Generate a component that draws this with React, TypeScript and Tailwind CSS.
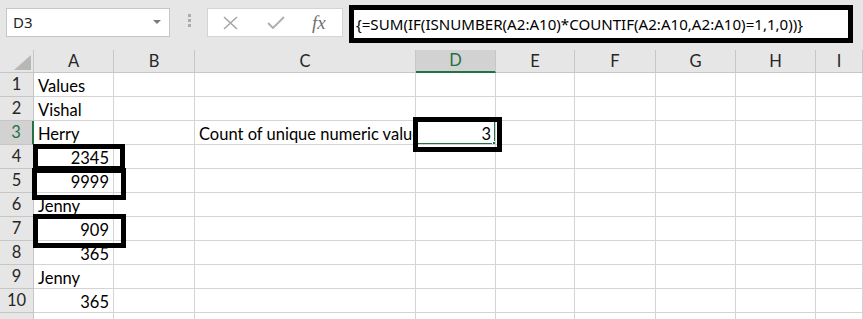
import React from "react";

type Cell = { text: string; align?: "left" | "right" };

const columns = ["A", "B", "C", "D", "E", "F", "G", "H", "I"];

// row -> column letter -> cell
const data: Record<number, Record<string, Cell>> = {
  1: { A: { text: "Values" } },
  2: { A: { text: "Vishal" } },
  3: {
    A: { text: "Herry" },
    C: { text: "Count of unique numeric values" },
    D: { text: "3", align: "right" },
  },
  4: { A: { text: "2345", align: "right" } },
  5: { A: { text: "9999", align: "right" } },
  6: { A: { text: "Jenny" } },
  7: { A: { text: "909", align: "right" } },
  8: { A: { text: "365", align: "right" } },
  9: { A: { text: "Jenny" } },
  10: { A: { text: "365", align: "right" } },
};

const formula = "{=SUM(IF(ISNUMBER(A2:A10)*COUNTIF(A2:A10,A2:A10)=1,1,0))}";

function FormulaBar() {
  return (
    <div className="relative h-[50px] bg-[#e6e6e6] flex items-start">
      {/* name box */}
      <div className="ml-[6px] mt-[8px] w-[164px] h-[29px] bg-white border border-[#c6c6c6] flex items-center justify-between pl-[6px] pr-[8px]">
        <span className="text-[15px] text-[#262626] font-['Noto_Sans',sans-serif]">D3</span>
        <svg width="8" height="5" viewBox="0 0 8 5">
          <polygon points="0,0 8,0 4,4" fill="#7a7a7a" />
        </svg>
      </div>
      {/* grip */}
      <div className="ml-[18px] mt-[14px] flex flex-col gap-[2px]">
        <span className="w-[3px] h-[3px] bg-[#ababab]" />
        <span className="w-[3px] h-[3px] bg-[#ababab]" />
        <span className="w-[3px] h-[3px] bg-[#ababab]" />
      </div>
      {/* cancel / enter / fx */}
      <div className="ml-[16px] mt-[8px] w-[136px] h-[29px] bg-white border border-[#d4d4d4] flex items-center">
        <svg className="ml-[15px]" width="15" height="14" viewBox="0 0 15 14">
          <path d="M1 1 L14 13 M14 1 L1 13" stroke="#a6a6a6" strokeWidth="1.6" fill="none" />
        </svg>
        <svg className="ml-[29px]" width="18" height="13" viewBox="0 0 18 13">
          <path d="M1 7 L6 12 L17 1" stroke="#b0b0b0" strokeWidth="2" fill="none" />
        </svg>
        <span className="ml-[27px] italic text-[19px] leading-none text-[#707070] font-['Liberation_Serif',serif]">
          fx
        </span>
      </div>
      {/* formula input */}
      <div className="ml-[6px] mt-[5px] w-[504px] h-[38px] bg-white border-[5px] border-black flex items-center pl-[2px]">
        <span className="text-[15.1px] text-black whitespace-nowrap font-['Noto_Sans',sans-serif]">
          {formula}
        </span>
      </div>
    </div>
  );
}

function Grid() {
  return (
    <div className="relative">
      <div className="grid grid-cols-[34px_80px_81px_221px_80px_79px_81px_80px_80px_1fr] grid-rows-[23px_repeat(11,24px)] font-['Lato',sans-serif] text-[16.5px]">
        {/* corner */}
        <div className="bg-[#e6e6e6] border-r border-b border-[#c6c6c6] flex items-end justify-end pr-[2px] pb-[2px]">
          <svg width="17" height="15" viewBox="0 0 17 15">
            <polygon points="17,0 17,15 0,15" fill="#b7b7b7" />
          </svg>
        </div>
        {columns.map((c) =>
          c === "D" ? (
            <div
              key={c}
              className="bg-[#d2d2d2] border-r border-[#c6c6c6] border-b-2 border-b-[#217346] flex items-center justify-center text-[#217346]"
            >
              {c}
            </div>
          ) : (
            <div
              key={c}
              className="bg-[#e6e6e6] border-r border-b border-[#c6c6c6] flex items-center justify-center text-[#262626]"
            >
              {c}
            </div>
          )
        )}

        {Array.from({ length: 11 }, (_, i) => i + 1).map((r) => (
          <React.Fragment key={r}>
            {r === 3 ? (
              <div className="bg-[#d2d2d2] border-b border-[#c6c6c6] border-r-2 border-r-[#217346] flex items-center justify-center text-[#217346]">
                {r}
              </div>
            ) : (
              <div className="bg-[#e6e6e6] border-b border-r border-[#c6c6c6] flex items-center justify-center text-[#262626]">
                {r <= 10 ? r : ""}
              </div>
            )}
            {columns.map((c) => {
              const cell = data[r]?.[c];
              const selected = r === 3 && c === "D";
              return (
                <div
                  key={c}
                  className={`relative border-r border-b border-[#d4d4d4] flex items-end overflow-hidden whitespace-nowrap px-[4px] pb-[2px] leading-none text-black ${
                    cell?.align === "right" ? "justify-end" : "justify-start"
                  }`}
                >
                  {cell?.text}
                  {selected && (
                    <div className="absolute inset-[-1px] border-2 border-[#217346]">
                      <div className="absolute right-[-4px] bottom-[-4px] w-[6px] h-[6px] bg-[#217346] border border-white" />
                    </div>
                  )}
                </div>
              );
            })}
          </React.Fragment>
        ))}
      </div>

      {/* annotation boxes */}
      <div className="absolute left-[33px] top-[94px] w-[92px] h-[27px] border-[5px] border-black" />
      <div className="absolute left-[32px] top-[118px] w-[94px] h-[32px] border-[5px] border-black" />
      <div className="absolute left-[33px] top-[164px] w-[93px] h-[34px] border-[5px] border-black" />
      <div className="absolute left-[413px] top-[67px] w-[89px] h-[35px] border-[5px] border-black" />
    </div>
  );
}

export default function App() {
  return (
    <div className="w-[863px] h-[319px] overflow-hidden bg-white">
      <FormulaBar />
      <Grid />
    </div>
  );
}
